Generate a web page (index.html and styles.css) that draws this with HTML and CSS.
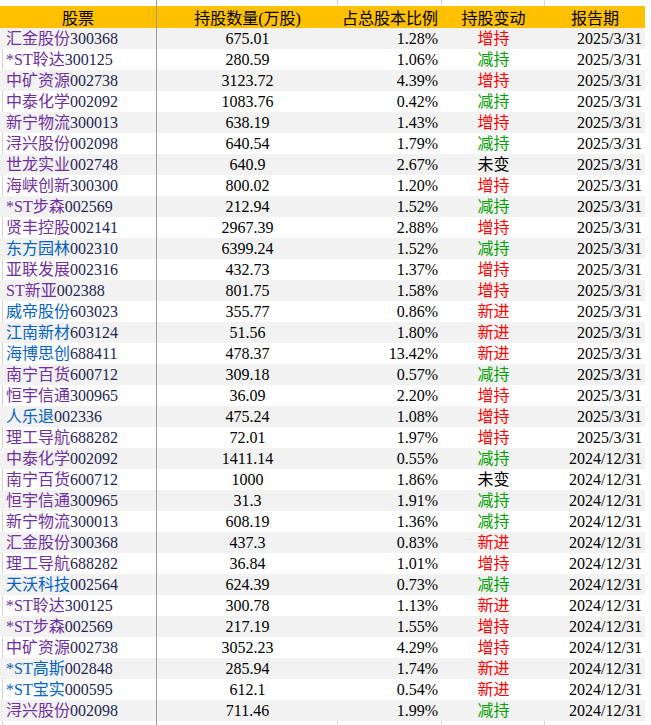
FILE: index.html
```html
<!DOCTYPE html>
<html lang="zh-CN">
<head>
<meta charset="utf-8">
<title>持股变动</title>
<link rel="stylesheet" href="styles.css">
</head>
<body>
<div class="sheet">
  <div class="row strip top"><div class="c ca"></div><div class="c cb"></div><div class="c cc"></div><div class="c cd"></div><div class="c ce"></div></div>
  <div class="row head"><div class="c ca">股票</div><div class="c cb">持股数量(万股)</div><div class="c cc">占总股本比例</div><div class="c cd">持股变动</div><div class="c ce">报告期</div></div>

  <div class="row alt"><div class="c ca"><span class="pu">汇金股份</span><span class="code">300368</span></div><div class="c cb">675.01</div><div class="c cc">1.28%</div><div class="c cd up">增持</div><div class="c ce">2025/3/31</div></div>
  <div class="row"><div class="c ca"><span class="pu">*ST聆达</span><span class="code">300125</span></div><div class="c cb">280.59</div><div class="c cc">1.06%</div><div class="c cd dn">减持</div><div class="c ce">2025/3/31</div></div>
  <div class="row alt"><div class="c ca"><span class="pu">中矿资源</span><span class="code">002738</span></div><div class="c cb">3123.72</div><div class="c cc">4.39%</div><div class="c cd up">增持</div><div class="c ce">2025/3/31</div></div>
  <div class="row"><div class="c ca"><span class="pu">中泰化学</span><span class="code">002092</span></div><div class="c cb">1083.76</div><div class="c cc">0.42%</div><div class="c cd dn">减持</div><div class="c ce">2025/3/31</div></div>
  <div class="row alt"><div class="c ca"><span class="pu">新宁物流</span><span class="code">300013</span></div><div class="c cb">638.19</div><div class="c cc">1.43%</div><div class="c cd up">增持</div><div class="c ce">2025/3/31</div></div>
  <div class="row"><div class="c ca"><span class="pu">浔兴股份</span><span class="code">002098</span></div><div class="c cb">640.54</div><div class="c cc">1.79%</div><div class="c cd dn">减持</div><div class="c ce">2025/3/31</div></div>
  <div class="row alt"><div class="c ca"><span class="pu">世龙实业</span><span class="code">002748</span></div><div class="c cb">640.9</div><div class="c cc">2.67%</div><div class="c cd same">未变</div><div class="c ce">2025/3/31</div></div>
  <div class="row"><div class="c ca"><span class="pu">海峡创新</span><span class="code">300300</span></div><div class="c cb">800.02</div><div class="c cc">1.20%</div><div class="c cd up">增持</div><div class="c ce">2025/3/31</div></div>
  <div class="row alt"><div class="c ca"><span class="pu">*ST步森</span><span class="code">002569</span></div><div class="c cb">212.94</div><div class="c cc">1.52%</div><div class="c cd dn">减持</div><div class="c ce">2025/3/31</div></div>
  <div class="row"><div class="c ca"><span class="pu">贤丰控股</span><span class="code">002141</span></div><div class="c cb">2967.39</div><div class="c cc">2.88%</div><div class="c cd up">增持</div><div class="c ce">2025/3/31</div></div>
  <div class="row alt"><div class="c ca"><span class="bl">东方园林</span><span class="code">002310</span></div><div class="c cb">6399.24</div><div class="c cc">1.52%</div><div class="c cd dn">减持</div><div class="c ce">2025/3/31</div></div>
  <div class="row"><div class="c ca"><span class="pu">亚联发展</span><span class="code">002316</span></div><div class="c cb">432.73</div><div class="c cc">1.37%</div><div class="c cd up">增持</div><div class="c ce">2025/3/31</div></div>
  <div class="row alt"><div class="c ca"><span class="pu">ST新亚</span><span class="code">002388</span></div><div class="c cb">801.75</div><div class="c cc">1.58%</div><div class="c cd up">增持</div><div class="c ce">2025/3/31</div></div>
  <div class="row"><div class="c ca"><span class="bl">威帝股份</span><span class="code">603023</span></div><div class="c cb">355.77</div><div class="c cc">0.86%</div><div class="c cd up">新进</div><div class="c ce">2025/3/31</div></div>
  <div class="row alt"><div class="c ca"><span class="bl">江南新材</span><span class="code">603124</span></div><div class="c cb">51.56</div><div class="c cc">1.80%</div><div class="c cd up">新进</div><div class="c ce">2025/3/31</div></div>
  <div class="row"><div class="c ca"><span class="bl">海博思创</span><span class="code">688411</span></div><div class="c cb">478.37</div><div class="c cc">13.42%</div><div class="c cd up">新进</div><div class="c ce">2025/3/31</div></div>
  <div class="row alt"><div class="c ca"><span class="pu">南宁百货</span><span class="code">600712</span></div><div class="c cb">309.18</div><div class="c cc">0.57%</div><div class="c cd dn">减持</div><div class="c ce">2025/3/31</div></div>
  <div class="row"><div class="c ca"><span class="pu">恒宇信通</span><span class="code">300965</span></div><div class="c cb">36.09</div><div class="c cc">2.20%</div><div class="c cd up">增持</div><div class="c ce">2025/3/31</div></div>
  <div class="row alt"><div class="c ca"><span class="bl">人乐退</span><span class="code">002336</span></div><div class="c cb">475.24</div><div class="c cc">1.08%</div><div class="c cd up">增持</div><div class="c ce">2025/3/31</div></div>
  <div class="row"><div class="c ca"><span class="pu">理工导航</span><span class="code">688282</span></div><div class="c cb">72.01</div><div class="c cc">1.97%</div><div class="c cd up">增持</div><div class="c ce">2025/3/31</div></div>
  <div class="row alt"><div class="c ca"><span class="pu">中泰化学</span><span class="code">002092</span></div><div class="c cb">1411.14</div><div class="c cc">0.55%</div><div class="c cd dn">减持</div><div class="c ce">2024/12/31</div></div>
  <div class="row"><div class="c ca"><span class="pu">南宁百货</span><span class="code">600712</span></div><div class="c cb">1000</div><div class="c cc">1.86%</div><div class="c cd same">未变</div><div class="c ce">2024/12/31</div></div>
  <div class="row alt"><div class="c ca"><span class="pu">恒宇信通</span><span class="code">300965</span></div><div class="c cb">31.3</div><div class="c cc">1.91%</div><div class="c cd dn">减持</div><div class="c ce">2024/12/31</div></div>
  <div class="row"><div class="c ca"><span class="pu">新宁物流</span><span class="code">300013</span></div><div class="c cb">608.19</div><div class="c cc">1.36%</div><div class="c cd dn">减持</div><div class="c ce">2024/12/31</div></div>
  <div class="row alt"><div class="c ca"><span class="pu">汇金股份</span><span class="code">300368</span></div><div class="c cb">437.3</div><div class="c cc">0.83%</div><div class="c cd up">新进</div><div class="c ce">2024/12/31</div></div>
  <div class="row"><div class="c ca"><span class="pu">理工导航</span><span class="code">688282</span></div><div class="c cb">36.84</div><div class="c cc">1.01%</div><div class="c cd up">增持</div><div class="c ce">2024/12/31</div></div>
  <div class="row alt"><div class="c ca"><span class="bl">天沃科技</span><span class="code">002564</span></div><div class="c cb">624.39</div><div class="c cc">0.73%</div><div class="c cd dn">减持</div><div class="c ce">2024/12/31</div></div>
  <div class="row"><div class="c ca"><span class="pu">*ST聆达</span><span class="code">300125</span></div><div class="c cb">300.78</div><div class="c cc">1.13%</div><div class="c cd up">新进</div><div class="c ce">2024/12/31</div></div>
  <div class="row alt"><div class="c ca"><span class="pu">*ST步森</span><span class="code">002569</span></div><div class="c cb">217.19</div><div class="c cc">1.55%</div><div class="c cd up">增持</div><div class="c ce">2024/12/31</div></div>
  <div class="row"><div class="c ca"><span class="pu">中矿资源</span><span class="code">002738</span></div><div class="c cb">3052.23</div><div class="c cc">4.29%</div><div class="c cd up">增持</div><div class="c ce">2024/12/31</div></div>
  <div class="row alt"><div class="c ca"><span class="bl">*ST高斯</span><span class="code">002848</span></div><div class="c cb">285.94</div><div class="c cc">1.74%</div><div class="c cd up">新进</div><div class="c ce">2024/12/31</div></div>
  <div class="row"><div class="c ca"><span class="bl">*ST宝实</span><span class="code">000595</span></div><div class="c cb">612.1</div><div class="c cc">0.54%</div><div class="c cd up">新进</div><div class="c ce">2024/12/31</div></div>
  <div class="row alt"><div class="c ca"><span class="pu">浔兴股份</span><span class="code">002098</span></div><div class="c cb">711.46</div><div class="c cc">1.99%</div><div class="c cd dn">减持</div><div class="c ce">2024/12/31</div></div>

  <div class="row strip bottom"><div class="c ca"></div><div class="c cb"></div><div class="c cc"></div><div class="c cd"></div><div class="c ce"></div></div>
</div>
</body>
</html>
```

FILE: styles.css
```css
html, body {
  margin: 0;
  padding: 0;
  background: #ffffff;
}

.sheet {
  width: 651px;
  height: 725px;
  overflow: hidden;
  font-family: "Liberation Serif", "Noto Sans CJK SC", serif;
  font-size: 16px;
  color: #000000;
}

.row {
  display: grid;
  grid-template-columns: 157px 181px 104px 103px 100px 6px;
  height: 21px;
  line-height: 21px;
  white-space: nowrap;
}

.row::after {
  content: "";
  background: #ffffff;
}

.c {
  box-sizing: border-box;
  overflow: hidden;
}

.ca {
  border-right: 1px solid #9e9e9e;
  padding-left: 6px;
  background-image: linear-gradient(to right, transparent 2px, #d4d4d4 2px, #d4d4d4 3px, transparent 3px);
}

.cb { text-align: center; }
.cc { text-align: right; padding-right: 4px; }
.cd { text-align: center; }
.ce { text-align: right; padding-right: 3px; }

.alt {
  background: #f2f2f2;
}

.alt .ca {
  background-image: none;
}

.head {
  height: 22px;
  line-height: 18px;
  background: #ffc000;
}

.head .c {
  padding-top: 4px;
  text-align: center;
  padding-left: 0;
  padding-right: 0;
  background-image: none;
}

.strip.top {
  height: 6px;
}

.strip.bottom {
  height: 4px;
}

.strip .cb,
.strip .cc,
.strip .cd {
  border-right: 1px solid #d4d4d4;
}

.strip.top .ca {
  background-image: none;
}

.pu { color: #7030a0; }
.bl { color: #0563c1; }
.code { color: #1f2553; }

.up { color: #ff0000; }
.dn { color: #00a000; }
.same { color: #000000; }
```
